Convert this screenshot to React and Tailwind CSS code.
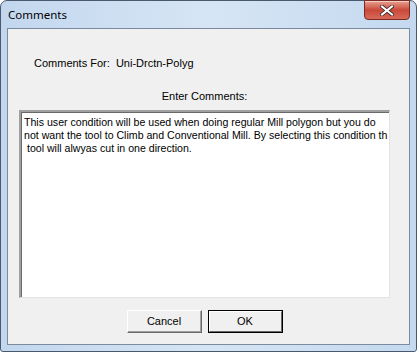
export default function App() {
  const lines = [
    "This user condition will be used when doing regular Mill polygon but you do",
    "not want the tool to Climb and Conventional Mill. By selecting this condition th",
    " tool will alwyas cut in one direction.",
  ];

  return (
    <div className="h-[352px] w-[417px] bg-white" style={{ fontFamily: '"Liberation Sans", Arial, sans-serif' }}>
      {/* window frame */}
      <div className="relative flex h-[352px] w-[417px] flex-col rounded-t-[7px] rounded-b-[3px] border border-[#4a5a6e] bg-gradient-to-r from-[#c2d7ee] via-[#d6e5f5] to-[#c4d9ef] px-[6px] pb-[6px]">
        {/* title bar */}
        <div className="flex h-[27px] shrink-0 items-center pl-[1px]">
          <span className="text-[11.5px] text-black" style={{ fontFamily: '"Noto Sans", "Liberation Sans", sans-serif' }}>
            Comments
          </span>
        </div>

        {/* close button */}
        <div className="absolute right-[6px] top-[-1px] flex h-[20px] w-[46px] items-center justify-center rounded-b-[4px] border border-[#7a2a22] bg-gradient-to-b from-[#e8a090] via-[#c9483a] to-[#d7695a] shadow-[inset_0_1px_0_rgba(255,255,255,0.5)]">
          <svg width="14" height="11" viewBox="0 0 14 11">
            <path d="M2 1.5 L12 9.5 M12 1.5 L2 9.5" stroke="#3a2a2a" strokeWidth="3.6" strokeLinecap="square" />
            <path d="M2 1.5 L12 9.5 M12 1.5 L2 9.5" stroke="#ffffff" strokeWidth="2" strokeLinecap="square" />
          </svg>
        </div>

        {/* client area */}
        <div className="flex flex-1 flex-col border border-[#7b8a9c] bg-[#f0f0f0] text-[11px] text-black">
          <div className="mt-[28px] pl-[26px] leading-[13px]">Comments For:&nbsp;&nbsp;Uni-Drctn-Polyg</div>

          <div className="mt-[20px] pr-[8px] text-center leading-[13px]">Enter Comments:</div>

          <div className="ml-[11px] mr-[19px] mt-[7px] h-[188px] border-l-2 border-t-2 border-b border-r border-l-[#a0a0a0] border-t-[#a0a0a0] border-b-[#e3e3e3] border-r-[#e3e3e3]">
            <div className="h-full overflow-hidden border-l border-t border-[#696969] bg-white pl-[2px] pt-[3px] text-[10.6px]">
              {lines.map((l, i) => (
                <div key={i} className="whitespace-pre leading-[13px]">
                  {l}
                </div>
              ))}
            </div>
          </div>

          <div className="mt-[12px] flex justify-center gap-[6px] pr-[8px]">
            <button className="h-[23px] w-[75px] border border-b-[#696969] border-r-[#696969] border-l-white border-t-white bg-[#f0f0f0] text-[11px] shadow-[inset_-1px_-1px_0_#a0a0a0]">
              Cancel
            </button>
            <button className="h-[23px] w-[75px] border border-black bg-[#f0f0f0] text-[11px]">
              <div className="flex h-full w-full items-center justify-center border border-b-[#696969] border-r-[#696969] border-l-white border-t-white">
                OK
              </div>
            </button>
          </div>
        </div>
      </div>
    </div>
  );
}
